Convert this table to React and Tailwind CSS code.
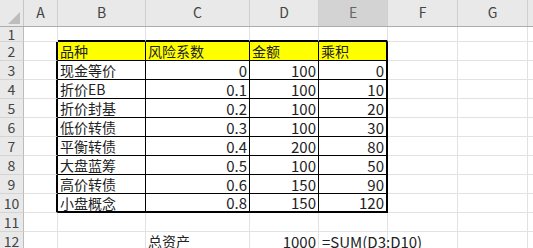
const COLS = [
  { key: '', w: 'w-[24px]' },
  { key: 'A', w: 'w-[34px]' },
  { key: 'B', w: 'w-[88px]' },
  { key: 'C', w: 'w-[104px]' },
  { key: 'D', w: 'w-[69px]' },
  { key: 'E', w: 'w-[69px]' },
  { key: 'F', w: 'w-[70px]' },
  { key: 'G', w: 'w-[70px]' },
  { key: 'H', w: 'w-[40px]' },
];

const ROWS = {
  2: ['品种', '风险系数', '金额', '乘积'],
  3: ['现金等价', '0', '100', '0'],
  4: ['折价EB', '0.1', '100', '10'],
  5: ['折价封基', '0.2', '100', '20'],
  6: ['低价转债', '0.3', '100', '30'],
  7: ['平衡转债', '0.4', '200', '80'],
  8: ['大盘蓝筹', '0.5', '100', '50'],
  9: ['高价转债', '0.6', '150', '90'],
  10: ['小盘概念', '0.8', '150', '120'],
};

const inTable = (r, c) => r >= 2 && r <= 10 && c >= 2 && c <= 5;

function rightBorder(r, c) {
  if ((inTable(r, c) && c === 5) || (inTable(r, c + 1) && c + 1 === 2)) return 'border-r-2 border-r-black';
  if (inTable(r, c)) return 'border-r border-r-black';
  return 'border-r border-r-[#e2e2e2]';
}

function bottomBorder(r, c) {
  if ((inTable(r, c) && r === 10) || (inTable(r + 1, c) && r + 1 === 2)) return 'border-b-2 border-b-black';
  if (inTable(r, c)) return 'border-b border-b-black';
  return 'border-b border-b-[#e2e2e2]';
}

function cellContent(r, c) {
  if (ROWS[r] && c >= 2 && c <= 5) return ROWS[r][c - 2];
  if (r === 12 && c === 3) return '总资产';
  if (r === 12 && c === 4) return '1000';
  if (r === 12 && c === 5) return '=SUM(D3:D10)';
  return '';
}

function Cell({ r, c }) {
  const text = cellContent(r, c);
  const numeric = text !== '' && /^[0-9.]+$/.test(text);
  const yellow = r === 2 && c >= 2 && c <= 5;
  return (
    <div
      className={`${COLS[c].w} shrink-0 h-full flex items-center whitespace-nowrap overflow-visible ${rightBorder(r, c)} ${bottomBorder(r, c)} ${yellow ? 'bg-[#ffff00]' : ''} ${numeric ? 'justify-end pr-[2px] text-[15px]' : 'justify-start pl-[2px] text-[14px]'} ${r === 12 && c === 5 ? 'pl-[3px] text-[15px]' : ''}`}
    >
      <span className="relative z-10 leading-none">{text}</span>
    </div>
  );
}

function RowHeader({ r }) {
  return (
    <div className="w-[24px] shrink-0 h-full flex items-center justify-center bg-[#e9e9e9] border-r border-r-[#bcbcbc] border-b border-b-[#d4d4d4] text-[14px] text-[#444]">
      {r}
    </div>
  );
}

export default function App() {
  const rowNums = [1, 2, 3, 4, 5, 6, 7, 8, 9, 10, 11, 12];
  return (
    <div className="w-[533px] h-[248px] overflow-hidden bg-white text-[#222]" style={{ fontFamily: '"Noto Sans CJK SC", "Noto Sans", sans-serif' }}>
      <div className="flex h-[27px] bg-[#e9e9e9] border-b border-b-[#acacac]">
        <div className="w-[24px] shrink-0 h-full border-r border-r-[#c6c6c6] flex items-end justify-end pb-[2px] pr-[3px]">
          <svg width="12" height="12" viewBox="0 0 12 12">
            <polygon points="12,0 12,12 0,12" fill="#bdbdbd" />
          </svg>
        </div>
        {COLS.slice(1).map((col) => (
          <div
            key={col.key}
            className={`${col.w} shrink-0 h-full flex items-end justify-center pb-[3px] text-[14px] border-r border-r-[#cfcfcf] ${col.key === 'E' ? 'bg-[#d3d3d3] text-[#666]' : 'text-[#444]'}`}
          >
            {col.key === 'H' ? '' : col.key}
          </div>
        ))}
      </div>
      {rowNums.map((r) => (
        <div key={r} className={`flex ${r === 1 ? 'h-[15px]' : 'h-[19px]'}`}>
          <RowHeader r={r} />
          {COLS.slice(1).map((col, i) => (
            <Cell key={col.key} r={r} c={i + 1} />
          ))}
        </div>
      ))}
    </div>
  );
}
